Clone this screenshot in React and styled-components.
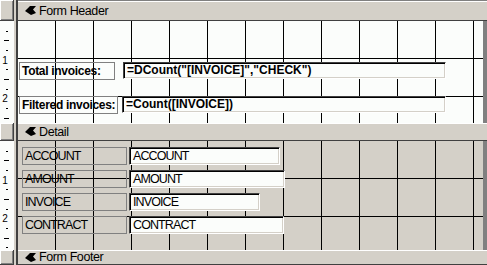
import React from 'react';
import styled, { createGlobalStyle } from 'styled-components';

const GlobalStyle = createGlobalStyle`
  html, body {
    margin: 0;
    padding: 0;
    background: #d4d0c8;
  }
  body {
    font-family: "Liberation Sans", Arial, sans-serif;
  }
`;

const Designer = styled.div`
  width: 487px;
  height: 265px;
  overflow: hidden;
  display: grid;
  grid-template-columns: 14px 4px 1fr;
  grid-template-rows: 21px 102px 18px 109px 1fr;
  background: #d4d0c8;
`;

const Divider = styled.div`
  grid-column: 2;
  grid-row: 1 / -1;
  background: linear-gradient(to right, #d4d0c8 0 2px, #404040 2px 4px);
`;

const Selector = styled.div`
  grid-column: 1;
  box-sizing: border-box;
  background: #d4d0c8;
  border-right: 1px solid #404040;
  border-bottom: 1px solid #404040;
  box-shadow: inset 1px 1px #fff, inset -1px -1px #808080;
`;

const RulerCell = styled.div`
  grid-column: 1;
  background: #fbfdfb;
  overflow: hidden;
`;

const SectionBar = styled.div`
  grid-column: 3;
  box-sizing: border-box;
  display: flex;
  align-items: center;
  gap: 3px;
  padding-left: 7px;
  background: #d4d0c8;
  border-top: ${(p) => (p.$top ? '1px solid #808080' : 'none')};
  border-bottom: 1px solid #404040;
  box-shadow: inset 0 1px #fff;
  font-size: 12.5px;
  color: #000;
  letter-spacing: -0.4px;
`;

const Canvas = styled.div`
  grid-column: 3;
  position: relative;
  overflow: hidden;
  background-color: ${(p) => p.$bg};
  background-image:
    linear-gradient(to right, #000 1px, transparent 1px),
    linear-gradient(to bottom, #000 1px, transparent 1px);
  background-size: 38px 100%, 100% 38px;
  background-position: 37px 0, 0 37px;
  border-right: 4px solid #808080;
`;

const Label = styled.div`
  position: absolute;
  left: ${(p) => p.$x}px;
  top: ${(p) => p.$y}px;
  width: ${(p) => p.$w}px;
  height: ${(p) => p.$h}px;
  box-sizing: border-box;
  border: 1px solid #808080;
  padding-left: 2px;
  line-height: ${(p) => p.$h - 2}px;
  font-size: ${(p) => (p.$bold ? '12px' : '12.5px')};
  font-weight: ${(p) => (p.$bold ? 700 : 400)};
  letter-spacing: ${(p) => (p.$bold ? '-0.3px' : '-0.9px')};
  white-space: nowrap;
  color: #000;
`;

const TextBox = styled.div`
  position: absolute;
  left: ${(p) => p.$x}px;
  top: ${(p) => p.$y}px;
  width: ${(p) => p.$w}px;
  height: ${(p) => p.$h}px;
  box-sizing: border-box;
  background: #fbfdfb;
  border: 1px solid;
  border-color: #404040 #fff #fff #404040;
  box-shadow: inset 1px 1px #000, inset -1px -1px #d4d0c8;
  padding-left: 3px;
  line-height: ${(p) => p.$h - 2}px;
  font-size: ${(p) => (p.$bold ? '12px' : '12.5px')};
  font-weight: ${(p) => (p.$bold ? 700 : 400)};
  letter-spacing: ${(p) => (p.$bold ? '0' : '-0.9px')};
  white-space: nowrap;
  overflow: hidden;
  color: #000;
`;

function SectionIcon() {
  return (
    <svg width="11" height="9" viewBox="0 0 11 9">
      <path d="M0 5 L5 0 L11 0 L8 3.5 L11 7 L6 9 Z" fill="#000" />
    </svg>
  );
}

function Ruler({ height }) {
  const step = 9.65;
  const marks = [];
  for (let i = 1; i * step < height; i++) {
    const y = Math.round(i * step);
    if (i % 4 === 0) {
      marks.push(
        <text key={i} x="5" y={y + 4} fontSize="10" textAnchor="middle"
          fontFamily="Liberation Sans, Arial, sans-serif">{i / 4}</text>
      );
    } else if (i % 2 === 0) {
      marks.push(<rect key={i} x="4" y={y} width="5" height="1" fill="#000" />);
    } else {
      marks.push(<rect key={i} x="6" y={y} width="2" height="1" fill="#000" />);
    }
  }
  return (
    <svg width="14" height={height} viewBox={`0 0 14 ${height}`}>{marks}</svg>
  );
}

const detailFields = [
  { name: 'ACCOUNT', y: 6, tw: 151 },
  { name: 'AMOUNT', y: 29, tw: 156 },
  { name: 'INVOICE', y: 52, tw: 131 },
  { name: 'CONTRACT', y: 75, tw: 155 },
];

export default function App() {
  return (
    <>
      <GlobalStyle />
      <Designer>
        <Selector />
        <Divider />
        <SectionBar $top>
          <SectionIcon />
          Form Header
        </SectionBar>

        <RulerCell><Ruler height={102} /></RulerCell>
        <Canvas $bg="#fbfdfb">
          <Label $bold $x={1} $y={41} $w={96} $h={18}>Total invoices:</Label>
          <TextBox $bold $x={105} $y={41} $w={323} $h={17}>=DCount("[INVOICE]","CHECK")</TextBox>
          <Label $bold $x={1} $y={75} $w={99} $h={18}>Filtered invoices:</Label>
          <TextBox $bold $x={104} $y={75} $w={324} $h={17}>=Count([INVOICE])</TextBox>
        </Canvas>

        <Selector />
        <SectionBar>
          <SectionIcon />
          Detail
        </SectionBar>

        <RulerCell><Ruler height={109} /></RulerCell>
        <Canvas $bg="#d4d0c8">
          {detailFields.map((f) => (
            <React.Fragment key={f.name}>
              <Label $x={4} $y={f.y} $w={105} $h={18}>{f.name}</Label>
              <TextBox $x={111} $y={f.y} $w={f.tw} $h={18}>{f.name}</TextBox>
            </React.Fragment>
          ))}
        </Canvas>

        <Selector />
        <SectionBar>
          <SectionIcon />
          Form Footer
        </SectionBar>
      </Designer>
    </>
  );
}
